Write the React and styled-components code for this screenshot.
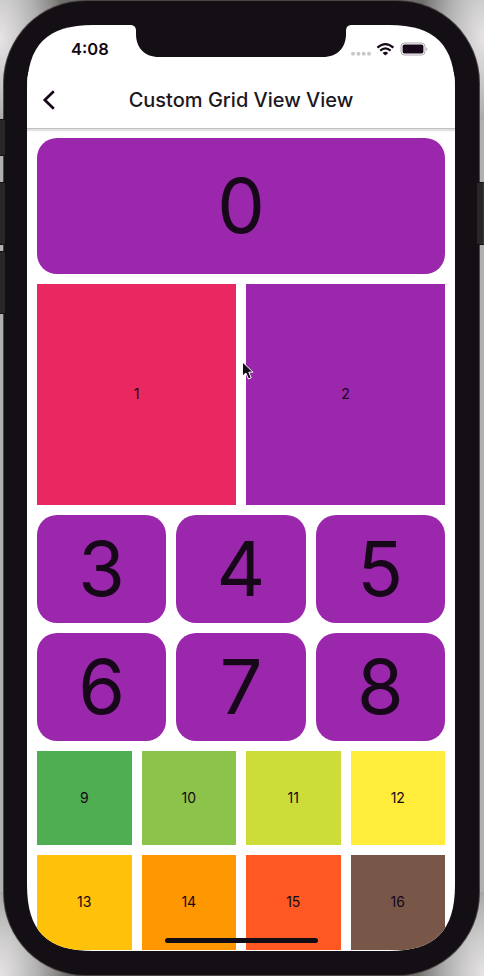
import React from "react";
import styled, { createGlobalStyle, css } from "styled-components";

const Global = createGlobalStyle`
  * { box-sizing: border-box; }
  body { margin: 0; background: #b0b0b1; overflow: hidden; }
`;

const glow = "#e8e3e6 0%, #cbcacb 32%, #b0b0b1 58%, #858583 88%, #6f6f6c 100%";

const Backdrop = styled.main`
  position: relative;
  display: grid;
  grid-template-columns: 4px 475px 5px;
  width: 484px;
  height: 976px;
  padding: 1px 0;
  overflow: hidden;
  font-family: Inter, "Liberation Sans", sans-serif;
  color: #160818;
  background:
    radial-gradient(ellipse 64px 130px at 0 38px, ${glow}) 0 0 / 90px 120px no-repeat,
    radial-gradient(ellipse 64px 130px at 100% 38px, ${glow}) 100% 0 / 90px 120px no-repeat,
    radial-gradient(ellipse 66px 130px at 0 100%, ${glow}) 0 100% / 90px 84px no-repeat,
    radial-gradient(ellipse 66px 130px at 100% 100%, ${glow}) 100% 100% / 90px 84px no-repeat,
    #b0b0b1;
`;

const Rail = styled.div`
  z-index: 1;
  display: flex;
  flex-direction: column;
  align-items: ${(p) => (p.$side === "right" ? "flex-end" : "flex-start")};
  gap: 6px;
  padding-top: ${(p) => (p.$side === "right" ? 181 : 118)}px;
`;

const SideKey = styled.div`
  flex: none;
  width: ${(p) => p.$width}px;
  height: ${(p) => p.$height}px;
  background: #292726;
  border: solid #191014;
  border-width: 1px 0;
  ${(p) => p.$edge && "border-right: 1px solid #4a3130;"}
  ${(p) => p.$spaced && "margin-bottom: 20px;"}
`;

const Phone = styled.div`
  height: 974px;
  padding: 24px 24px 24px 23px;
  border-radius: 82px;
  background: #140f15;
  box-shadow: 0 0 0 1px #4b4543;
`;

const Screen = styled.div`
  position: relative;
  width: 428px;
  height: 926px;
  overflow: hidden;
  background: #fff;
  clip-path: path("M0 66 C0 20 20 0 66 0 H362 C408 0 428 20 428 66 V860 C428 906 408 926 362 926 H66 C20 926 0 906 0 860 Z");
`;

const StatusBar = styled.div`
  height: 47px;
  display: grid;
  grid-template-columns: 103px 222px 103px;
`;

const Clock = styled.time`
  padding: 14px 0 0 44px;
  font-size: 16.5px;
  font-weight: 600;
  line-height: 20px;
`;

const Notch = styled.svg`
  width: 222px;
  height: 32px;
`;

const StatusIcons = styled.svg`
  width: 80px;
  height: 16px;
  margin-top: 17px;
  justify-self: start;
  margin-left: -2px;
`;

const AppBar = styled.header`
  height: 56px;
  display: grid;
  grid-template-columns: 56px 1fr 56px;
  align-items: center;
  background: #fff;
  box-shadow: 0 1px 0 #c2bec2, 0 3px 1px #e3e0e3;
`;

const BackButton = styled.button`
  width: 44px;
  height: 44px;
  padding: 0;
  border: 0;
  background: none;
  display: grid;
  place-items: center;
`;

const Title = styled.h1`
  margin: 0;
  text-align: center;
  font-size: 20px;
  line-height: 24px;
  font-weight: 500;
  white-space: nowrap;
  color: #1c181d;
`;

const Content = styled.div`
  padding: 10px;
  display: flex;
  flex-direction: column;
  gap: 10px;
`;

const Row = styled.div`
  display: grid;
  grid-template-columns: repeat(${(p) => p.$columns}, 1fr);
  gap: 10px;
  height: ${(p) => p.$height}px;
`;

const Tile = styled.div`
  display: grid;
  place-items: center;
  background: ${(p) => p.$color};
  font-size: 14px;
  line-height: 1;
  padding-bottom: 0.6px;
  ${(p) =>
    p.$large &&
    css`
      border-radius: 20px;
      padding-bottom: 0;
      font-size: 75.5px;
      font-weight: 400;
    `}
`;

const HomeIndicator = styled.div`
  position: absolute;
  inset: auto 0 8px;
  margin: 0 auto;
  width: 153px;
  height: 5px;
  border-radius: 3px;
  background: #120c14;
`;

const Pointer = styled.svg`
  position: absolute;
  left: 241px;
  top: 361px;
  width: 14px;
  height: 19px;
`;

const purple = "#9b27ad";
const rows = [
  { height: 136, large: true, colors: [purple] },
  { height: 221, colors: ["#e92861", purple] },
  { height: 107.8, large: true, colors: [purple, purple, purple] },
  { height: 107.8, large: true, colors: [purple, purple, purple] },
  { height: 94.6, colors: ["#4eae51", "#8cc34b", "#ccdd39", "#ffec3b"] },
  { height: 94.5, colors: ["#ffc10a", "#ff9800", "#ff5822", "#785749"] },
];

let next = 0;
const grid = rows.map((row) => ({
  ...row,
  tiles: row.colors.map((color) => ({ color, index: next++ })),
}));

export default function App() {
  return (
    <>
      <Global />
      <Backdrop>
        <Rail $side="left">
          <SideKey $width={5} $height={37} $spaced />
          <SideKey $width={5} $height={63} />
          <SideKey $width={5} $height={63} />
        </Rail>
        <Phone>
          <Screen>
            <StatusBar>
              <Clock>4:08</Clock>
              <Notch viewBox="0 0 222 32">
                <path d="M0 0C4 0 6 2 6 6V9C6 23 15 32 29 32H193C207 32 216 23 216 9V6C216 2 218 0 222 0Z" fill="#140f15" />
              </Notch>
              <StatusIcons viewBox="0 0 80 16">
                <g fill="#cbc8cb">
                  <circle cx="3" cy="11.7" r="2" />
                  <circle cx="8.4" cy="11.7" r="2" />
                  <circle cx="13.7" cy="11.7" r="2" />
                  <circle cx="19" cy="11.7" r="2" />
                </g>
                <g fill="none" stroke="#160818" strokeWidth="2.2">
                  <path d="M27.4 5.6Q35.4-1.4 43.4 5.6" />
                  <path d="M30.2 8.6Q35.4 4.2 40.6 8.6" />
                </g>
                <path d="M32.6 10.9Q35.4 8.7 38.2 10.9L35.4 13.5Z" fill="#160818" />
                <rect x="51" y="1" width="24" height="12" rx="3.5" fill="none" stroke="#aaa6ab" />
                <path d="M76.2 5.2Q78.6 7 76.2 8.8Z" fill="#aaa6ab" />
                <rect x="52.6" y="2.4" width="20.8" height="9.2" rx="1.8" fill="#160818" />
              </StatusIcons>
            </StatusBar>
            <AppBar>
              <BackButton aria-label="Back">
                <svg width="14" height="20" viewBox="0 0 14 20" fill="none" stroke="#160818" strokeWidth="2.7">
                  <path d="M11.8 1.2L2.8 10L11.8 18.8" />
                </svg>
              </BackButton>
              <Title>Custom Grid View View</Title>
            </AppBar>
            <Content>
              {grid.map((row) => (
                <Row key={row.tiles[0].index} $columns={row.tiles.length} $height={row.height}>
                  {row.tiles.map((tile) => (
                    <Tile key={tile.index} $color={tile.color} $large={row.large}>
                      {tile.index}
                    </Tile>
                  ))}
                </Row>
              ))}
            </Content>
            <HomeIndicator />
          </Screen>
        </Phone>
        <Rail $side="right">
          <SideKey $width={7} $height={63} $edge />
        </Rail>
        <Pointer viewBox="0 0 14 19">
          <path d="M1.5 1V15L5 12L7.5 18L10.2 16.8L7.8 11.2H12Z" fill="#120c14" stroke="#fff" />
        </Pointer>
      </Backdrop>
    </>
  );
}
